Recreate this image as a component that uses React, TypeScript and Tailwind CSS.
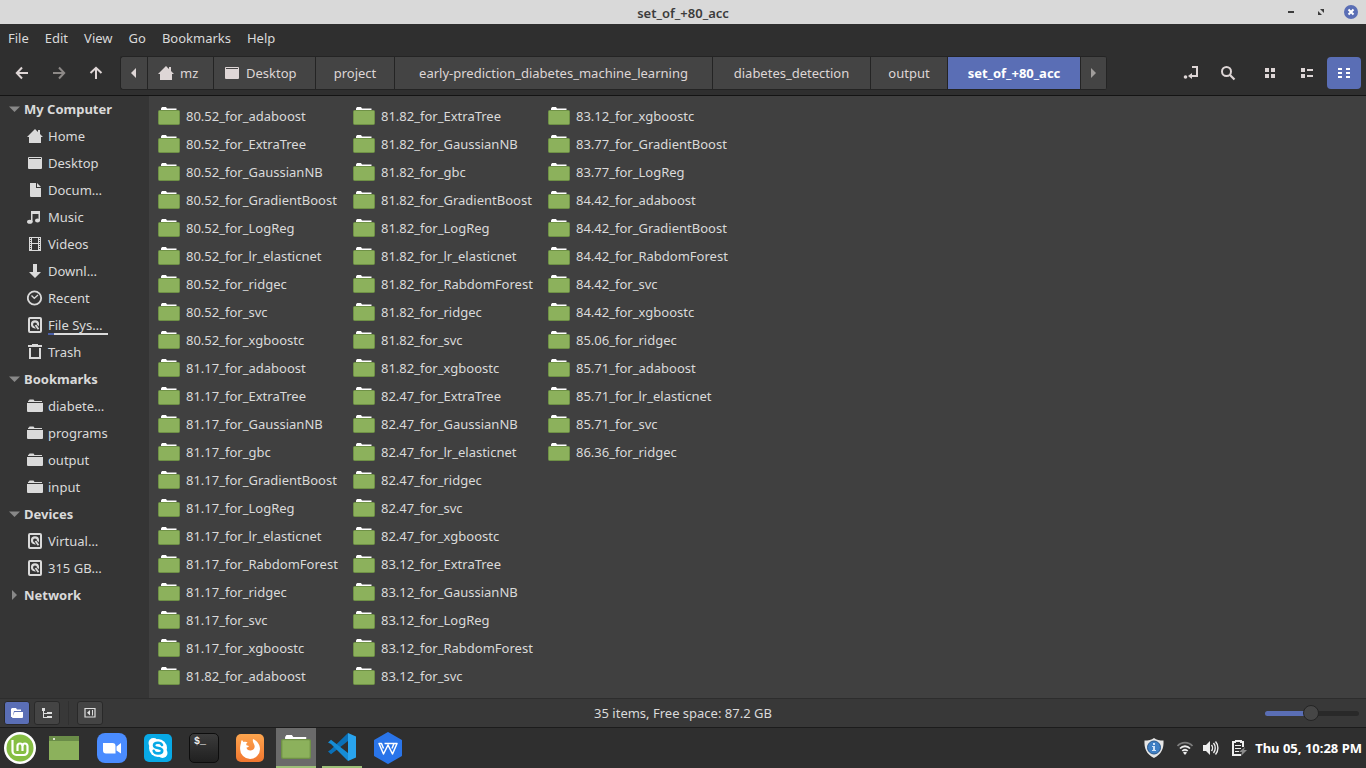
import type { ReactNode } from "react";

const files = [
  "80.52_for_adaboost",
  "80.52_for_ExtraTree",
  "80.52_for_GaussianNB",
  "80.52_for_GradientBoost",
  "80.52_for_LogReg",
  "80.52_for_lr_elasticnet",
  "80.52_for_ridgec",
  "80.52_for_svc",
  "80.52_for_xgboostc",
  "81.17_for_adaboost",
  "81.17_for_ExtraTree",
  "81.17_for_GaussianNB",
  "81.17_for_gbc",
  "81.17_for_GradientBoost",
  "81.17_for_LogReg",
  "81.17_for_lr_elasticnet",
  "81.17_for_RabdomForest",
  "81.17_for_ridgec",
  "81.17_for_svc",
  "81.17_for_xgboostc",
  "81.82_for_adaboost",
  "81.82_for_ExtraTree",
  "81.82_for_GaussianNB",
  "81.82_for_gbc",
  "81.82_for_GradientBoost",
  "81.82_for_LogReg",
  "81.82_for_lr_elasticnet",
  "81.82_for_RabdomForest",
  "81.82_for_ridgec",
  "81.82_for_svc",
  "81.82_for_xgboostc",
  "82.47_for_ExtraTree",
  "82.47_for_GaussianNB",
  "82.47_for_lr_elasticnet",
  "82.47_for_ridgec",
  "82.47_for_svc",
  "82.47_for_xgboostc",
  "83.12_for_ExtraTree",
  "83.12_for_GaussianNB",
  "83.12_for_LogReg",
  "83.12_for_RabdomForest",
  "83.12_for_svc",
  "83.12_for_xgboostc",
  "83.77_for_GradientBoost",
  "83.77_for_LogReg",
  "84.42_for_adaboost",
  "84.42_for_GradientBoost",
  "84.42_for_RabdomForest",
  "84.42_for_svc",
  "84.42_for_xgboostc",
  "85.06_for_ridgec",
  "85.71_for_adaboost",
  "85.71_for_lr_elasticnet",
  "85.71_for_svc",
  "86.36_for_ridgec",
];

function Glyph({ children }: { children: ReactNode }) {
  return (
    <svg width="16" height="16" viewBox="0 0 16 16" fill="currentColor" className="shrink-0" aria-hidden="true">
      {children}
    </svg>
  );
}

const HomeIcon = () => (
  <Glyph>
    <path d="M8 1 0 9h2v6h12V9h2l-3-3V2h-2v2z" />
  </Glyph>
);
const DesktopIcon = () => (
  <Glyph>
    <path fillRule="evenodd" d="M2 2h12a1 1 0 0 1 1 1v10a1 1 0 0 1-1 1H2a1 1 0 0 1-1-1V3a1 1 0 0 1 1-1zm0 1v1h12V3z" />
  </Glyph>
);
const DocumentIcon = () => (
  <Glyph>
    <path d="M3 1h6v5h5v9H4a1 1 0 0 1-1-1z" />
    <path d="M10 1l4 4h-4z" />
  </Glyph>
);
const MusicIcon = () => (
  <Glyph>
    <path d="M4 2h9v10h-1.500V5h-6v8H4z" />
    <ellipse cx="2.800" cy="12.800" rx="2.800" ry="2" />
    <ellipse cx="10.500" cy="11.500" rx="2.500" ry="2" />
  </Glyph>
);
const VideoIcon = () => (
  <Glyph>
    <path
      fillRule="evenodd"
      d="M2 1h12v14H2zM5 2v5h6V2zM5 8v6h6V8zM3 2v1h1V2zm0 2v1h1V4zm0 2v1h1V6zm0 2v1h1V8zm0 2v1h1v-1zm0 2v1h1v-1zM12 2v1h1V2zm0 2v1h1V4zm0 2v1h1V6zm0 2v1h1V8zm0 2v1h1v-1zm0 2v1h1v-1z"
    />
  </Glyph>
);
const DownloadIcon = () => (
  <Glyph>
    <path d="M6 1h4v8h4l-6 6-6-6h4z" />
  </Glyph>
);
const RecentIcon = () => (
  <Glyph>
    <circle cx="7.500" cy="8" r="6.700" fill="none" stroke="currentColor" strokeWidth="1.800" />
    <path d="M4.500 5.500 7.300 8.300 11 5" fill="none" stroke="currentColor" strokeWidth="1.300" />
  </Glyph>
);
const DiskIcon = () => (
  <Glyph>
    <rect x="2" y="1" width="12" height="14" rx="1" fill="none" stroke="currentColor" strokeWidth="2" />
    <circle cx="8" cy="7.300" r="3" fill="none" stroke="currentColor" strokeWidth="2.200" />
    <path d="M7.500 7l4 5" stroke="#353535" strokeWidth="3.400" />
    <path d="M8.500 8l3 4.200" stroke="currentColor" strokeWidth="1.800" />
  </Glyph>
);
const TrashIcon = () => (
  <Glyph>
    <path fillRule="evenodd" d="M5 0h6v1h4v2H1V1h4zM2 4h12v11H2zm2 0v9h8V4z" />
  </Glyph>
);
const SmallFolderIcon = () => (
  <Glyph>
    <path d="M2 2.500 2.500 1.500h4L7.500 3H15v1H1V3zM0 5h16v8a1 1 0 0 1-1 1H1a1 1 0 0 1-1-1z" />
  </Glyph>
);

function FolderIcon({ large = false }: { large?: boolean }) {
  return (
    <svg
      width={large ? 30 : 22}
      height={large ? 24 : 18}
      viewBox="0 0 22 18"
      preserveAspectRatio="none"
      className="shrink-0"
      aria-hidden="true"
    >
      <path d="M3 5V1.500L4 0h4l1 1.500h9.500V5z" fill="#fff" />
      <rect x="0.500" y="3.500" width="21" height="14" rx="1" fill="#8cb15c" stroke="#6f9146" />
    </svg>
  );
}

const places: { label: string; icon: ReactNode; meter?: boolean }[] = [
  { label: "Home", icon: <HomeIcon /> },
  { label: "Desktop", icon: <DesktopIcon /> },
  { label: "Docum…", icon: <DocumentIcon /> },
  { label: "Music", icon: <MusicIcon /> },
  { label: "Videos", icon: <VideoIcon /> },
  { label: "Downl…", icon: <DownloadIcon /> },
  { label: "Recent", icon: <RecentIcon /> },
  { label: "File Sys…", icon: <DiskIcon />, meter: true },
  { label: "Trash", icon: <TrashIcon /> },
];
const bookmarks = ["diabete…", "programs", "output", "input"].map((label) => ({ label, icon: <SmallFolderIcon /> }));
const devices = ["Virtual…", "315 GB…"].map((label) => ({ label, icon: <DiskIcon /> }));

function SidebarSection({
  title,
  items = [],
  open = true,
}: {
  title: string;
  items?: { label: string; icon: ReactNode; meter?: boolean }[];
  open?: boolean;
}) {
  return (
    <section>
      <button className="flex h-[27px] w-full items-center gap-1 pb-0.5 pl-2 font-bold" aria-expanded={open}>
        <svg width="12" height="12" viewBox="0 0 12 12" fill="#888" aria-hidden="true">
          {open ? <path d="M1 3.500h11L6.500 9z" /> : <path d="M4 1v10l5-5z" />}
        </svg>
        {title}
      </button>
      {items.map((item) => (
        <a key={item.label} href="#" className="flex h-[27px] items-center gap-[5px] pb-0.5 pl-[27px]">
          {item.icon}
          <span className="relative">
            {item.label}
            {item.meter && (
              <span className="absolute -bottom-px left-0 flex h-0.5 w-[60px] bg-[#dcdcdc]">
                <span className="w-1.5 bg-[#4a5fa8]" />
              </span>
            )}
          </span>
        </a>
      ))}
    </section>
  );
}

function ToolButton({ label, className = "", children }: { label: string; className?: string; children: ReactNode }) {
  return (
    <button aria-label={label} className={`flex h-8 w-[34px] items-center justify-center rounded-sm ${className}`}>
      {children}
    </button>
  );
}

const crumb = "flex h-8 items-center border-r border-[#242424]";

function Toolbar() {
  return (
    <div className="flex h-[46px] items-center border-b border-[#141414] px-[5px] text-[#ded6d6]">
      <nav className="flex gap-[3px]" aria-label="History">
        <ToolButton label="Back">
          <Glyph>
            <path d="M8 2.500 2.800 8 8 13.500M3 8h11" fill="none" stroke="currentColor" strokeWidth="2" />
          </Glyph>
        </ToolButton>
        <ToolButton label="Forward" className="text-[#8d8987]">
          <Glyph>
            <path d="M8 2.500 13.200 8 8 13.500M13 8H2" fill="none" stroke="currentColor" strokeWidth="2" />
          </Glyph>
        </ToolButton>
        <ToolButton label="Up">
          <Glyph>
            <path d="M2.500 8 8 2.800 13.500 8M8 3v11" fill="none" stroke="currentColor" strokeWidth="2" />
          </Glyph>
        </ToolButton>
      </nav>
      <nav
        className="ml-[7px] flex overflow-hidden rounded-[3px] border-y border-l border-[#242424] bg-[#444]"
        aria-label="Path"
      >
        <button aria-label="Scroll left" className={`${crumb} w-[27px] justify-center`}>
          <svg width="6" height="12" viewBox="0 0 6 12" fill="currentColor"><path d="M5 1v10L0 6z" /></svg>
        </button>
        <button className={`${crumb} w-[66px] gap-1.5 pl-2.5`}>
          <HomeIcon />
          mz
        </button>
        <button className={`${crumb} w-[102px] gap-1.5 pl-2.5`}>
          <DesktopIcon />
          Desktop
        </button>
        <button className={`${crumb} w-[79px] justify-center`}>project</button>
        <button className={`${crumb} w-[318px] justify-center`}>early-prediction_diabetes_machine_learning</button>
        <button className={`${crumb} w-[158px] justify-center`}>diabetes_detection</button>
        <button className={`${crumb} w-[77px] justify-center`}>output</button>
        <button className={`${crumb} w-[133px] justify-center bg-[#5a6eb5] font-bold text-white`}>set_of_+80_acc</button>
        <button aria-label="Scroll right" className={`${crumb} w-[26px] justify-center text-[#a09d9b]`}>
          <svg width="6" height="12" viewBox="0 0 6 12" fill="currentColor"><path d="M0 1v10l5-5z" /></svg>
        </button>
      </nav>
      <div className="ml-auto flex gap-[3px]">
        <ToolButton label="Toggle location entry">
          <Glyph>
            <path d="M9 2h5v9H8" fill="none" stroke="currentColor" strokeWidth="2" />
            <path d="M9 8v6L5 11z" />
            <circle cx="2.500" cy="12" r="1.800" />
          </Glyph>
        </ToolButton>
        <ToolButton label="Search">
          <Glyph>
            <circle cx="6.500" cy="6.500" r="4.500" fill="none" stroke="currentColor" strokeWidth="2" />
            <path d="M10 10l4.500 4.500" stroke="currentColor" strokeWidth="2.200" />
          </Glyph>
        </ToolButton>
        <ToolButton label="Icon view" className="ml-[5px]">
          <Glyph>
            <path d="M3 3h4v4H3zM9 3h4v4H9zM3 9h4v4H3zM9 9h4v4H9z" />
          </Glyph>
        </ToolButton>
        <ToolButton label="List view">
          <Glyph>
            <path d="M2 3h4v4H2zM8 4h6v2H8zM2 9h4v4H2zM8 10h6v2H8z" />
          </Glyph>
        </ToolButton>
        <ToolButton label="Compact view" className="bg-[#5a6eb5] text-white">
          <Glyph>
            <path d="M2 3h4v2H2zM10 3h4v2h-4zM2 7h4v2H2zM10 7h4v2h-4zM2 11h4v2H2zM10 11h4v2h-4z" />
          </Glyph>
        </ToolButton>
      </div>
    </div>
  );
}

const statusButton = "flex h-6 w-[26px] items-center justify-center rounded-[3px] border border-[#292929]";

function StatusBar() {
  return (
    <footer className="grid h-[29px] grid-cols-[1fr_auto_1fr] items-center border-t border-[#2d2d2d] bg-[#383838] px-1">
      <div className="flex items-center text-[#dedede]">
        <button aria-label="Show places" className={`${statusButton} bg-[#5a6eb5] text-white`}>
          <svg width="12" height="10" viewBox="0 0 12 10" fill="currentColor">
            <path d="M0 9V1l1-1h4l1 1.500h4V3H3L2 7v2zM3.500 4H12v5a1 1 0 0 1-1 1H1z" />
          </svg>
        </button>
        <button aria-label="Show treeview" className={`${statusButton} ml-1 bg-[#444]`}>
          <svg width="12" height="12" viewBox="0 0 12 12" fill="currentColor">
            <path d="M1 1h3v3H1zM2 4h1v7H2zM3 6h3v1H3zM3 10h3v1H3zM6 5h5v2H6zM6 9h5v2H6z" />
          </svg>
        </button>
        <span className="mx-2 h-6 w-px bg-[#303030]" />
        <button aria-label="Hide sidebar" className={`${statusButton} bg-[#444]`}>
          <svg width="12" height="12" viewBox="0 0 12 12">
            <path d="M1 1.500h10v8.500H1z" fill="none" stroke="currentColor" strokeWidth="1.200" />
            <path d="M6 3v5.500L3 5.800zM8 3h1v5.500H8z" fill="currentColor" />
          </svg>
        </button>
      </div>
      <p>35 items, Free space: 87.2 GB</p>
      <input
        type="range"
        aria-label="Zoom level"
        defaultValue={49}
        className="mr-[3px] h-[5px] w-[94px] appearance-none justify-self-end rounded-full bg-[linear-gradient(to_right,#5a6eb5_50%,#292929_50%)] [&::-webkit-slider-thumb]:h-4 [&::-webkit-slider-thumb]:w-4 [&::-webkit-slider-thumb]:appearance-none [&::-webkit-slider-thumb]:rounded-full [&::-webkit-slider-thumb]:border [&::-webkit-slider-thumb]:border-solid [&::-webkit-slider-thumb]:border-[#242424] [&::-webkit-slider-thumb]:bg-[#464646]"
      />
    </footer>
  );
}

const task = "flex w-10 shrink-0 items-center justify-center";

function Taskbar() {
  return (
    <div className="flex h-[41px] border-t border-[#1c1c1c] bg-[#2f2f2f] text-[#eee]">
      <button aria-label="Menu" className={task}>
        <svg width="32" height="32" viewBox="0 0 32 32">
          <circle cx="16" cy="16" r="16" fill="#fff" />
          <circle cx="16" cy="16" r="13.500" fill="#86be43" />
          <path d="M8.500 8v11a4 4 0 0 0 4 4h7.500a3.500 3.500 0 0 0 3.500-3.500V14a2.500 2.500 0 0 0-5 0v5" fill="none" stroke="#fff" strokeWidth="2.200" />
          <path d="M13.500 19v-5a2.500 2.500 0 0 1 5 0" fill="none" stroke="#fff" strokeWidth="2.200" />
        </svg>
      </button>
      <button aria-label="Show desktop" className={`${task} ml-1`}>
        <svg width="30" height="24" viewBox="0 0 30 24">
          <path fill="#8cb15c" d="M0 0h30v24H0z" />
          <path fill="#6a8c48" d="M0 0h30v5H0z" />
          <circle cx="5" cy="3" r="1" fill="#fff" />
        </svg>
      </button>
      <div className="ml-2 flex gap-1.5">
        <button aria-label="Video calls" className={task}>
          <svg width="30" height="30" viewBox="0 0 30 30">
            <rect width="30" height="30" rx="8" fill="#4a8cff" />
            <path d="M6 10h9.500a3 3 0 0 1 3 3v7.500H9a3 3 0 0 1-3-3zM19.500 13.500l4.500-3.500v10.500l-4.500-3z" fill="#fff" />
          </svg>
        </button>
        <button aria-label="Messenger" className={task}>
          <svg width="28" height="28" viewBox="0 0 28 28">
            <rect width="28" height="28" rx="5" fill="#08a9e6" />
            <circle cx="14" cy="14" r="9" fill="#fff" />
            <circle cx="9.500" cy="9" r="5" fill="#fff" />
            <circle cx="18.500" cy="19" r="5" fill="#fff" />
            <path d="M18 11c-.7-1.700-2.200-2.300-4-2.300-2.300 0-4 1-4 2.700 0 3.700 8.200 1.600 8.200 5.300 0 1.700-1.900 2.700-4.100 2.700S10 18.400 9.700 16.800" fill="none" stroke="#08a9e6" strokeWidth="2.600" strokeLinecap="round" />
          </svg>
        </button>
        <button aria-label="Terminal" className={task}>
          <span className="flex size-[30px] items-start rounded-[5px] border border-[#0d0d0d] bg-linear-to-b from-[#3c3c3c] to-[#202020] pl-1 pt-0.5 font-['Liberation_Mono',monospace] text-[10px] font-bold leading-3">
            $_
          </span>
        </button>
        <button aria-label="Web browser" className={task}>
          <svg width="28" height="28" viewBox="0 0 28 28">
            <defs>
              <linearGradient id="browser" x2="0" y2="1">
                <stop stopColor="#fda54e" />
                <stop offset="1" stopColor="#f1762f" />
              </linearGradient>
            </defs>
            <rect width="28" height="28" rx="5" fill="url(#browser)" />
            <path d="M5 9c0-1.700.5-2.500 1-3l1.500 2c1.500-.5 3-.3 4.200.5-1.300.4-1.800 1.500-1.200 2.700l2.500.8c-.5 1-1.300 1.400-2.500 1.600.2 2 2 3.200 4.300 3 2.800-.2 4.400-2.600 3.700-5.200-.5-2.200-2.300-3.200-1.500-6.400 3.500 1.400 7 5 7 10A9.900 9.900 0 0 1 4.100 15c0-2.300.3-4 .9-6z" fill="#fff" />
          </svg>
        </button>
        <button aria-label="File manager" className={`${task} border-b-2 border-[#9dbf78] bg-[#6a6a6a]`}>
          <FolderIcon large />
        </button>
        <button aria-label="Code editor" className={`${task} border-b-2 border-[#9dbf78]`}>
          <svg width="28" height="28" viewBox="0 0 28 28">
            <path d="M20 0 3 16.500 0 18.500l3 2.800L20 8z" fill="#0a70b8" />
            <path d="M20 28 3 11 0 9.500 3 6.700 20 20z" fill="#168cd5" />
            <path d="M20 0l8 3.500v21L20 28z" fill="#29a4ee" />
          </svg>
        </button>
        <button aria-label="Office" className={task}>
          <svg width="28" height="32" viewBox="0 0 28 32">
            <path d="M14 1 27 8.500v15L14 31 1 23.500v-15z" fill="#2a75ea" stroke="#2a75ea" strokeWidth="2" strokeLinejoin="round" />
            <path d="M9.500 16.500 7.500 11.500H5L9.500 22 14 13l4.500 9L23 11.500H10.500M20 11.500 18 16.500" fill="none" stroke="#fff" strokeWidth="1.500" strokeLinejoin="round" />
          </svg>
        </button>
      </div>
      <div className="ml-auto flex items-center pr-1">
        <button aria-label="Update manager" className="mr-3">
          <svg width="20" height="20" viewBox="0 0 20 20">
            <path d="M10 0c2.500 2 5.500 2.500 9.500 2.500C20 10 17.500 16.500 10 20 2.500 16.500 0 10 .5 2.500 4.500 2.500 7.500 2 10 0z" fill="#e6e6e6" />
            <circle cx="10" cy="9.500" r="6.500" fill="#3f7fc4" stroke="#28568a" />
            <path d="M9 5h2v2H9zM8 8h3v4h1v1H8v-1h1V9H8z" fill="#cfe2f7" />
          </svg>
        </button>
        <button aria-label="Network" className="mr-2">
          <svg width="18" height="16" viewBox="0 0 18 16" fill="none" strokeWidth="1.800">
            <path d="M1.500 6C5.500 1.500 12.500 1.500 16.500 6" stroke="#7d7d7d" />
            <path d="M4 8.500c2.800-3 7.200-3 10 0M6.300 11c1.600-1.700 3.800-1.700 5.400 0" stroke="#eee" />
            <path d="M7 12.500 9 15l2-2.500c-1-1-3-1-4 0z" fill="#eee" />
          </svg>
        </button>
        <button aria-label="Volume" className="mr-3">
          <svg width="17" height="16" viewBox="0 0 17 16" fill="currentColor">
            <path d="M1 5h3l4-4v14l-4-4H1z" />
            <path d="M9.500 5c1.300 1.600 1.300 4.400 0 6M11.500 3c2.300 2.700 2.300 7.300 0 10M13.500 1.500c3.200 3.500 3.200 9.500 0 13" fill="none" stroke="currentColor" strokeWidth="1.400" />
          </svg>
        </button>
        <button aria-label="Power" className="mr-2">
          <svg width="16" height="16" viewBox="0 0 16 16">
            <path d="M4 1v1H2v13h8M12 7V2h-2V1H4" fill="none" stroke="#eee" strokeWidth="2" />
            <path d="M4 5h6v1H4zM4 8h6v1H4zM4 11h4v1H4z" fill="#eee" />
            <path d="M14 7 8 12h3l-1 4 6-6h-3z" fill="#8a8a8a" />
          </svg>
        </button>
        <time className="text-[13px] font-bold text-white">Thu 05, 10:28 PM</time>
      </div>
    </div>
  );
}

export default function App() {
  return (
    <div className="flex h-screen flex-col overflow-hidden bg-[#2f2f2f] font-['Noto_Sans',sans-serif] text-[13px] leading-[18px] text-[#dadada]">
      <header className="grid h-6 grid-cols-[1fr_auto_1fr] items-center bg-[#d9d9d9] px-2 text-[#3c3c3c]">
        <h1 className="col-start-2 pt-0.5 font-semibold">set_of_+80_acc</h1>
        <div className="flex items-center gap-4 justify-self-end">
          <button aria-label="Minimize">
            <svg width="14" height="14" viewBox="0 0 14 14"><path d="M4 6h6v2H4z" fill="#3c3c3c" /></svg>
          </button>
          <button aria-label="Restore">
            <svg width="14" height="14" viewBox="0 0 14 14" fill="#3c3c3c"><path d="M6 4h4v4zM4 6v4h4z" /></svg>
          </button>
          <button aria-label="Close">
            <svg width="14" height="14" viewBox="0 0 14 14">
              <circle cx="7" cy="7" r="7" fill="#5a6eb5" />
              <path d="M4.500 4.500l5 5M9.500 4.500l-5 5" stroke="#fff" strokeWidth="2" />
            </svg>
          </button>
        </div>
      </header>
      <nav className="flex h-[26px] items-center gap-4 px-2 pt-0.5" aria-label="Menu bar">
        {["File", "Edit", "View", "Go", "Bookmarks", "Help"].map((m) => (
          <button key={m}>{m}</button>
        ))}
      </nav>
      <Toolbar />
      <div className="flex min-h-0 flex-1">
        <aside className="w-[149px] shrink-0 overflow-hidden bg-[#353535]">
          <SidebarSection title="My Computer" items={places} />
          <SidebarSection title="Bookmarks" items={bookmarks} />
          <SidebarSection title="Devices" items={devices} />
          <SidebarSection title="Network" open={false} />
        </aside>
        <main className="min-w-0 flex-1 bg-[#404040] pl-[9px] pt-1.5">
          <ul className="flex h-full flex-col flex-wrap content-start">
            {files.map((name) => (
              <li key={name} className="h-7 w-[195px]">
                <a href="#" className="flex h-full items-center gap-1.5">
                  <FolderIcon />
                  {name}
                </a>
              </li>
            ))}
          </ul>
        </main>
      </div>
      <StatusBar />
      <Taskbar />
    </div>
  );
}
